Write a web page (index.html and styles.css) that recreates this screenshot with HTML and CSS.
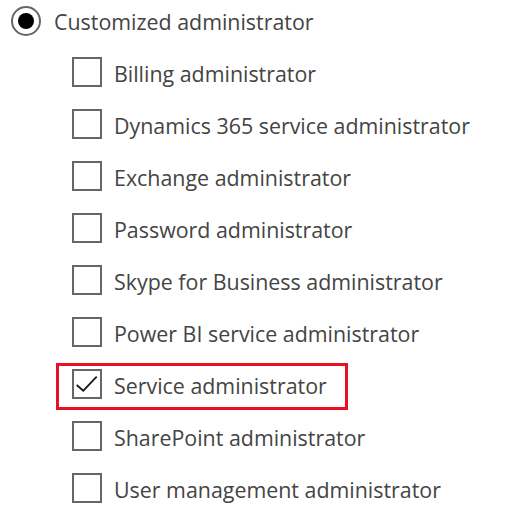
FILE: index.html
```html
<!DOCTYPE html>
<html>
<head>
<meta charset="utf-8">
<link rel="stylesheet" href="styles.css">
</head>
<body>
<div class="page">
  <div class="radio-row">
    <span class="radio"><span class="dot"></span></span>
    <span class="label">Customized administrator</span>
  </div>
  <ul class="list">
    <li class="row"><span class="box"></span><span class="label">Billing administrator</span></li>
    <li class="row"><span class="box"></span><span class="label">Dynamics 365 service administrator</span></li>
    <li class="row"><span class="box"></span><span class="label">Exchange administrator</span></li>
    <li class="row"><span class="box"></span><span class="label">Password administrator</span></li>
    <li class="row"><span class="box"></span><span class="label">Skype for Business administrator</span></li>
    <li class="row"><span class="box"></span><span class="label">Power BI service administrator</span></li>
    <li class="row">
      <span class="highlight">
        <span class="box checked"><svg width="26" height="26" viewBox="0 0 26 26"><path d="M2.7 14 L9.3 19.7 L22.7 5.7" fill="none" stroke="#1a1a1a" stroke-width="1.8"/></svg></span>
        <span class="label">Service administrator</span>
      </span>
    </li>
    <li class="row"><span class="box"></span><span class="label">SharePoint administrator</span></li>
    <li class="row"><span class="box"></span><span class="label">User management administrator</span></li>
  </ul>
</div>
</body>
</html>
```

FILE: styles.css
```css
html, body {
  margin: 0;
  padding: 0;
  background: #ffffff;
}
.page {
  font-family: "Open Sans", "Noto Sans", sans-serif;
  font-size: 21.4px;
  color: #444444;
  padding-left: 11px;
}
.radio-row {
  display: flex;
  align-items: center;
  height: 41px;
  gap: 13px;
}
.radio {
  box-sizing: border-box;
  width: 30px;
  height: 30px;
  border: 2px solid #666666;
  border-radius: 50%;
  display: flex;
  align-items: center;
  justify-content: center;
  flex: none;
}
.dot {
  width: 16px;
  height: 16px;
  border-radius: 50%;
  background: #000000;
}
.list {
  list-style: none;
  margin: 5px 0 0 61px;
  padding: 0;
}
.row {
  display: flex;
  align-items: center;
  height: 52px;
  gap: 12px;
}
.label {
  white-space: nowrap;
  padding-top: 2px;
}
.box {
  box-sizing: border-box;
  width: 30px;
  height: 30px;
  border: 2px solid #666666;
  flex: none;
  display: flex;
  align-items: center;
  justify-content: center;
}
.highlight {
  box-sizing: border-box;
  display: flex;
  align-items: center;
  gap: 12px;
  height: 47px;
  margin-left: -16px;
  margin-top: 5px;
  padding: 0 18px 5px 13px;
  border: 3px solid #e81123;
}
```
